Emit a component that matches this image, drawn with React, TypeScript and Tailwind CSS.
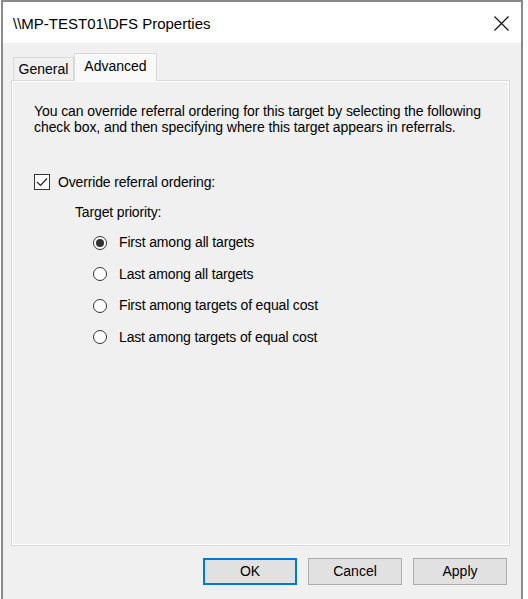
import React from "react";

const font = { fontFamily: '"Liberation Sans", Arial, sans-serif' };

function Radio({ checked, label }: { checked?: boolean; label: string }) {
  return (
    <div className="flex h-[31.5px] items-center">
      <div className="ml-[59px] flex h-[14px] w-[14px] items-center justify-center rounded-full border border-[#333333] bg-white">
        {checked && <div className="h-[8px] w-[8px] rounded-full bg-[#333333]" />}
      </div>
      <span className="ml-[12px] text-[14px] tracking-[-0.15px] text-black">{label}</span>
    </div>
  );
}

function Button({ label, primary }: { label: string; primary?: boolean }) {
  return (
    <div
      className={
        "flex h-[27px] w-[94px] items-center justify-center bg-[#e1e1e1] text-[14px] text-black " +
        (primary ? "border-2 border-[#0078d7]" : "border border-[#adadad]")
      }
    >
      {label}
    </div>
  );
}

export default function App() {
  return (
    <div className="h-[599px] w-[528px] overflow-hidden bg-white" style={font}>
      <div className="ml-[1px] flex h-[610px] w-[522px] flex-col border-x-2 border-t-2 border-[#8a8a8a] bg-[#f0f0f0]">
        {/* Title bar */}
        <div className="flex h-[41px] shrink-0 items-center justify-between bg-white pl-[10px] pr-[12px] pt-[3px]">
          <span className="text-[15px] text-black">\\MP-TEST01\DFS Properties</span>
          <svg width="15" height="15" viewBox="0 0 15 15" className="-mt-[2px]">
            <path d="M0.5 0.5 L14.5 14.5 M14.5 0.5 L0.5 14.5" stroke="#111" strokeWidth="1.2" fill="none" />
          </svg>
        </div>
        {/* Body */}
        <div className="flex flex-col pt-[10px]">
          {/* Tabs */}
          <div className="relative z-10 ml-[10px] flex items-end">
            <div className="flex h-[23px] w-[61px] items-center justify-center border border-b-0 border-[#d9d9d9] bg-[#f0f0f0] pt-[1px] text-[14px] text-black">
              General
            </div>
            <div className="-mb-px flex h-[28px] w-[83px] items-start justify-center border border-b-0 border-[#d9d9d9] bg-[#f9f9f9] pt-[2px] text-[14px] text-black">
              Advanced
            </div>
          </div>
          {/* Panel */}
          <div className="ml-[8px] mr-[11px] h-[466px] border border-[#d9d9d9] bg-[#f0f0f0] shadow-[inset_1px_1px_0_#ffffff,inset_-1px_-1px_0_#ffffff]">
            <div className="flex flex-col pl-[22px] pt-[22px]">
              <p className="text-[14px] leading-[16px] tracking-[-0.08px] text-black">
                You can override referral ordering for this target by selecting the following
                <br />
                check box, and then specifying where this target appears in referrals.
              </p>
              <div className="mt-[39px] flex h-[16px] items-center">
                <div className="flex h-[16px] w-[16px] items-center justify-center border border-[#333333] bg-white">
                  <svg width="12" height="10" viewBox="0 0 12 10">
                    <path d="M1 5 L4.5 8.5 L11 1.5" stroke="#222" strokeWidth="1.2" fill="none" />
                  </svg>
                </div>
                <span className="ml-[8px] text-[14px] tracking-[-0.15px] text-black">Override referral ordering:</span>
              </div>
              <div className="mt-[14px] flex h-[16px] items-center pl-[41px] text-[14px] tracking-[-0.15px] text-black">
                Target priority:
              </div>
              <div className="mt-[7px] flex flex-col">
                <Radio checked label="First among all targets" />
                <Radio label="Last among all targets" />
                <Radio label="First among targets of equal cost" />
                <Radio label="Last among targets of equal cost" />
              </div>
            </div>
          </div>
          {/* Buttons */}
          <div className="mt-[12px] flex justify-end gap-[11px] pr-[14px]">
            <Button label="OK" primary />
            <Button label="Cancel" />
            <Button label="Apply" />
          </div>
        </div>
      </div>
    </div>
  );
}
